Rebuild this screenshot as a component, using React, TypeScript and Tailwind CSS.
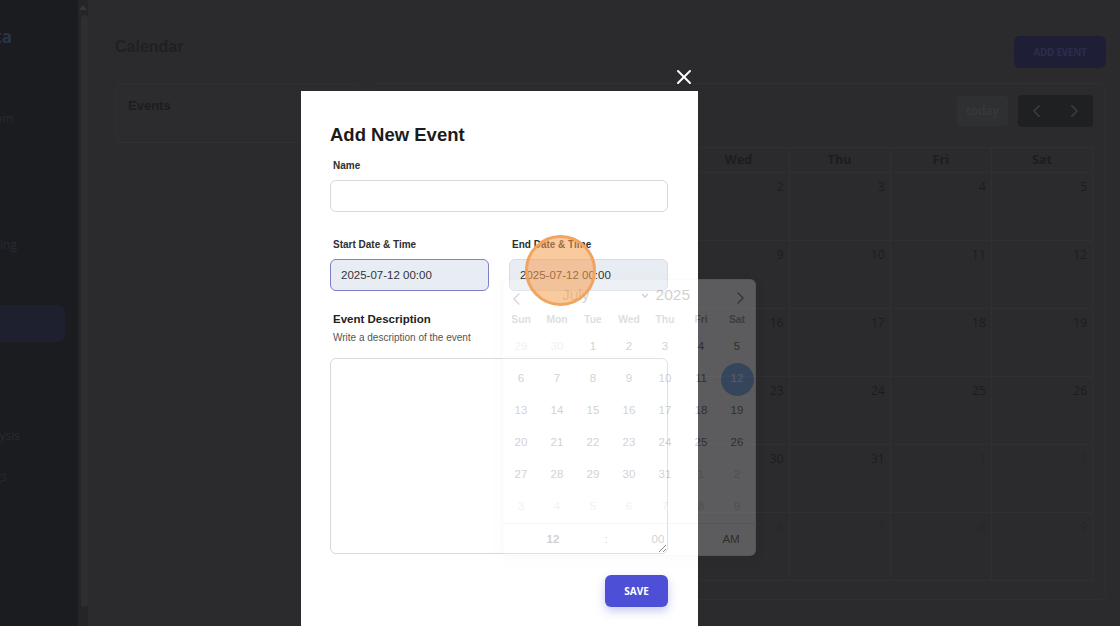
import React from "react";

type Day = { d: number; muted?: boolean };

const WEEKDAYS = ["Sun", "Mon", "Tue", "Wed", "Thu", "Fri", "Sat"];

// July 2025 as both the page calendar and the picker lay it out: Jun 29 – Aug 9
const DAYS: Day[] = [
  { d: 29, muted: true },
  { d: 30, muted: true },
  ...Array.from({ length: 31 }, (_, i) => ({ d: i + 1 })),
  ...Array.from({ length: 9 }, (_, i) => ({ d: i + 1, muted: true })),
];
const WEEKS = Array.from({ length: 6 }, (_, w) => DAYS.slice(w * 7, w * 7 + 7));

function Chevron({ dir, className }: { dir: "left" | "right"; className?: string }) {
  return (
    <svg viewBox="0 0 8 14" className={className} fill="none" stroke="currentColor" strokeLinecap="round" strokeLinejoin="round">
      {dir === "left" ? <polyline points="7,1 1,7 7,13" /> : <polyline points="1,1 7,7 1,13" />}
    </svg>
  );
}

// sidebar is scrolled off to the left: only the tail of each label shows
function SideLabel({ text, width, className }: { text: string; width: string; className?: string }) {
  return (
    <div className={`flex justify-end overflow-hidden whitespace-nowrap ${width} ${className ?? ""}`}>
      <span>{text}</span>
    </div>
  );
}

function Sidebar() {
  return (
    <aside className="flex h-full w-[78px] shrink-0 flex-col bg-[#1b1c20] font-['Open_Sans',sans-serif] text-[12px] leading-[18px] text-[#262a34]">
      <SideLabel text="Data" width="w-[12px]" className="mt-[26px] text-[17px] font-bold leading-[22px] text-[#29334c]" />
      <SideLabel text="Custom" width="w-[13px]" className="mt-[62px]" />
      <SideLabel text="Billing" width="w-[17px]" className="mt-[108px]" />
      <div className="mt-[51px] h-[37px] w-[65px] rounded-r-[8px] bg-[#1e2030]" />
      <SideLabel text="Analysis" width="w-[20px]" className="mt-[85px]" />
      <SideLabel text="Settings" width="w-[7px]" className="mt-[23px]" />
    </aside>
  );
}

function ScrollTrack() {
  return (
    <div className="flex h-full w-[10px] shrink-0 flex-col items-center bg-[#252527]">
      <svg viewBox="0 0 8 5" className="mt-[5px] h-[5px] w-[8px] text-[#38383a]" fill="currentColor">
        <polygon points="4,0 8,5 0,5" />
      </svg>
      <div className="mt-[5px] ml-[2px] h-[592px] w-[7px] rounded-full bg-[#2e2e30]" />
    </div>
  );
}

function Main() {
  return (
    <main className="min-w-0 flex-1 pl-[27px] pr-[14px] font-['Open_Sans',sans-serif]">
      <div className="flex items-start justify-between pt-[36px]">
        <h1 className="mt-[1px] font-['Liberation_Sans',Arial,sans-serif] text-[16px] font-bold leading-[20px] text-[#1f2022]">Calendar</h1>
        <button className="h-[32px] w-[92px] rounded-[6px] bg-[#1e1f36] text-[10px] font-bold tracking-[-0.3px] text-[#2b2d4d]">ADD EVENT</button>
      </div>

      <div className="mt-[15px] flex items-start gap-[10px]">
        <section className="h-[60px] w-[246px] rounded-[6px] border border-[#303032] bg-[#2c2c2e] px-[12px] pt-[13px]">
          <h2 className="font-['Liberation_Sans',Arial,sans-serif] text-[13px] font-bold leading-[18px] text-[#1c1c1e]">Events</h2>
        </section>

        <section className="flex-1 rounded-[6px] border border-[#303032] px-[12px] pb-[18px] pt-[11px]">
          <div className="flex h-[32px] items-center justify-between">
            <h2 className="text-[16px] font-bold text-[#1f2022]">July 2025</h2>
            <div className="flex items-center gap-[10px]">
              <button className="h-[30px] w-[51px] rounded-[4px] bg-[#2f3032] text-[12px] font-semibold text-[#38393c]">today</button>
              <div className="flex h-[32px] w-[75px] rounded-[4px] bg-[#1f2022] text-[#3a3b3e]">
                <button className="flex flex-1 items-center justify-center">
                  <Chevron dir="left" className="h-[12px] w-[7px] stroke-[2]" />
                </button>
                <button className="flex flex-1 items-center justify-center">
                  <Chevron dir="right" className="h-[12px] w-[7px] stroke-[2]" />
                </button>
              </div>
            </div>
          </div>

          <div className="mt-[20px] border-l border-t border-[#303032]">
            <div className="grid grid-cols-7">
              {WEEKDAYS.map((d) => (
                <div key={d} className="flex h-[25px] items-center justify-center border-b border-r border-[#303032] text-[12.5px] font-bold text-[#1d1d1f]">
                  {d}
                </div>
              ))}
            </div>
            {WEEKS.map((week, i) => (
              <div key={i} className="grid grid-cols-7">
                {week.map((day, j) => (
                  <div
                    key={j}
                    className={`h-[68px] border-b border-r border-[#303032] px-[5px] pt-[6px] text-right text-[12px] leading-[16px] ${
                      day.muted ? "text-[#262628]" : "text-[#1c1c1e]"
                    }`}
                  >
                    {day.d}
                  </div>
                ))}
              </div>
            ))}
          </div>
        </section>
      </div>
    </main>
  );
}

function EventModal() {
  const label = "block pl-[3px] text-[10px] font-bold leading-[12px] text-[#2e2e2e]";
  return (
    <>
      <button className="absolute left-[676px] top-[69px] h-[16px] w-[16px] text-white">
        <svg viewBox="0 0 16 16" className="h-[16px] w-[16px]" fill="none" stroke="currentColor" strokeWidth="2" strokeLinecap="round">
          <line x1="2" y1="2" x2="14" y2="14" />
          <line x1="14" y1="2" x2="2" y2="14" />
        </svg>
      </button>

      <div className="absolute left-[301px] top-[91px] h-[560px] w-[397px] bg-white pl-[29px] pr-[30px] pt-[33px] font-['Liberation_Sans',Arial,sans-serif]">
        <h2 className="text-[18.5px] font-bold leading-[22px] text-[#1b1b1b]">Add New Event</h2>

        <label className={`mt-[14px] ${label}`}>Name</label>
        <input readOnly className="mt-[8px] block h-[32px] w-full rounded-[6px] border border-[#d9d9d9] bg-white px-[10px] outline-none" />

        <div className="mt-[27px] grid grid-cols-2 gap-x-[20px]">
          <div>
            <label className={label}>Start Date &amp; Time</label>
            <input
              readOnly
              value="2025-07-12 00:00"
              className="mt-[8px] block h-[32px] w-full rounded-[6px] border border-[#7d80c4] bg-[#e8ecf3] pl-[10px] text-[11.5px] text-[#333] outline-none"
            />
          </div>
          <div>
            <label className={label}>End Date &amp; Time</label>
            <input
              readOnly
              value="2025-07-12 00:00"
              className="mt-[8px] block h-[32px] w-full rounded-[6px] border border-[#d9dce2] bg-[#e8ecf3] pl-[10px] text-[11.5px] text-[#333] outline-none"
            />
          </div>
        </div>

        <h3 className="mt-[21px] pl-[3px] text-[11.5px] font-bold leading-[14px] text-[#222]">Event Description</h3>
        <p className="mt-[6px] pl-[3px] text-[10px] leading-[12px] text-[#555]">Write a description of the event</p>
        <textarea readOnly className="mt-[14px] block h-[196px] w-full resize-y rounded-[6px] border border-[#d9d9d9] outline-none" />

        <div className="mt-[21px] flex justify-end">
          <button className="h-[32px] w-[63px] rounded-[6px] bg-[#4d4fd6] font-['Open_Sans',sans-serif] text-[10px] font-bold text-white shadow-[0_4px_10px_rgba(77,79,214,0.3)]">
            SAVE
          </button>
        </div>
      </div>
    </>
  );
}

// flatpickr popup, caught mid fade-in
function DatePicker() {
  return (
    <div className="absolute left-[503px] top-[280px] w-[252px] rounded-[5px] bg-white font-['Liberation_Sans',Arial,sans-serif] text-[#393939] opacity-[0.23] shadow-[0_0_0_1px_#e6e6e6,0_3px_13px_rgba(0,0,0,0.08)]">
      <div className="flex h-[30px] items-center">
        <span className="flex w-[27px] justify-center pt-[7px]">
          <Chevron dir="left" className="h-[12px] w-[7px] stroke-[1.3]" />
        </span>
        <span className="ml-[32px] text-[15.5px]">July</span>
        <svg viewBox="0 0 8 5" className="ml-[51px] h-[5px] w-[8px]" fill="none" stroke="currentColor" strokeWidth="1.4">
          <polyline points="1,1 4,4 7,1" />
        </svg>
        <span className="ml-[7px] text-[15.5px]">2025</span>
        <span className="ml-auto flex w-[30px] justify-center pt-[6px]">
          <Chevron dir="right" className="h-[12px] w-[7px] stroke-[1.3]" />
        </span>
      </div>

      <div className="grid h-[20px] grid-cols-7 items-center text-center text-[10.3px] font-bold text-[#757575]">
        {WEEKDAYS.map((d) => (
          <span key={d}>{d}</span>
        ))}
      </div>

      <div className="mt-[1px] grid grid-cols-7">
        {DAYS.map((day, i) => {
          const selected = !day.muted && day.d === 12;
          return (
            <div key={i} className="flex h-[32px] items-center justify-center">
              <span
                className={`flex h-[33px] w-[33px] items-center justify-center rounded-full text-[11.5px] ${
                  selected ? "bg-[#569ff7] text-white" : day.muted ? "text-[#c4c4c4]" : ""
                }`}
              >
                {day.d}
              </span>
            </div>
          );
        })}
      </div>

      <div className="flex h-[32px] items-center border-t border-[#e0e0e0] text-[11.5px]">
        <span className="w-[100px] text-center font-bold">12</span>
        <span className="w-[6px] text-center">:</span>
        <span className="w-[98px] text-center">00</span>
        <span className="flex-1 text-center">AM</span>
      </div>
    </div>
  );
}

export default function App() {
  return (
    <div className="relative flex h-[626px] w-[1120px] overflow-hidden bg-[#2b2b2d] font-['Liberation_Sans',Arial,sans-serif]">
      <Sidebar />
      <ScrollTrack />
      <Main />
      <EventModal />
      <DatePicker />
      {/* click highlight left by the screen recorder */}
      <div className="pointer-events-none absolute left-[525px] top-[235px] h-[71px] w-[71px] rounded-full border-[3px] border-[#f2a45f] bg-[rgba(245,158,80,0.55)]" />
    </div>
  );
}
